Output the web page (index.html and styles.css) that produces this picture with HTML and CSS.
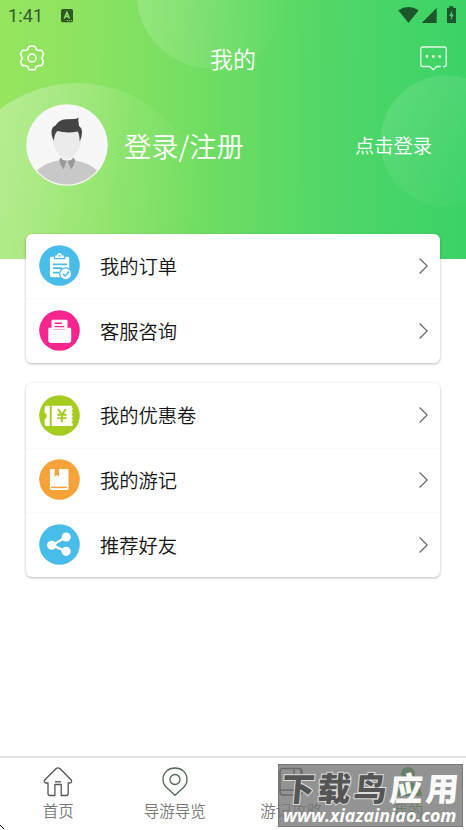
FILE: index.html
```html
<!DOCTYPE html>
<html lang="zh-CN">
<head>
<meta charset="utf-8">
<title>我的</title>
<link rel="stylesheet" href="styles.css">
</head>
<body>
<div class="app">
  <header class="hero">
    <svg class="hero-bg" width="466" height="259" viewBox="0 0 466 259">
      <defs>
        <linearGradient id="g1" x1="0" y1=".5" x2="1" y2=".6"><stop offset="0" stop-color="#fff" stop-opacity=".17"/><stop offset="1" stop-color="#fff" stop-opacity="0"/></linearGradient>
        <linearGradient id="g2" x1="0" y1=".3" x2="1" y2=".5"><stop offset="0" stop-color="#fff" stop-opacity=".36"/><stop offset=".3" stop-color="#fff" stop-opacity=".25"/><stop offset=".65" stop-color="#fff" stop-opacity=".08"/><stop offset="1" stop-color="#fff" stop-opacity="0"/></linearGradient>
        <linearGradient id="g3" x1=".1" y1=".1" x2=".8" y2=".8"><stop offset="0" stop-color="#fff" stop-opacity=".12"/><stop offset="1" stop-color="#fff" stop-opacity=".02"/></linearGradient>
      </defs>
      <circle cx="212" cy="-7" r="75.500" fill="url(#g1)"/>
      <circle cx="77" cy="209.500" r="126.500" fill="url(#g2)"/>
      <circle cx="446" cy="141" r="65.500" fill="url(#g3)"/>
    </svg>
    <div class="status">
      <span class="clock">1:41</span>
      <svg class="app-badge" width="12" height="14" viewBox="0 0 12 14"><rect width="12" height="13.300" rx="1.500" fill="#315a22"/><path d="M3.300 9.500 5.900 3.500 8.500 9.500M4.300 7.500h3.200" fill="none" stroke="#8be269" stroke-width="1.500"/><path d="M6 11.700h1m1 0h1m1 0h1" stroke="#8be269"/></svg>
      <svg class="signals" width="60" height="18" viewBox="0 0 60 18"><path d="M.3 4.200Q10.500-2.400 20.700 4.200L10.500 17Z" fill="#1c562b"/><path d="M38.700 2v15H23.700Z" fill="#1c562b"/><path d="M49 2h2.200V.2h4.200V2H58v15h-9Z" fill="#1c562b"/><path d="M54.200 4.500 51.200 10h2l-.7 4.500 3.300-6h-2Z" fill="#55cc70"/></svg>
    </div>
    <div class="bar">
      <svg width="24" height="26" viewBox="0 0 24 26" fill="none" stroke="#fff" stroke-width="1.500" stroke-linejoin="round"><path d="M9.800 1.200h4.400q.8 0 1.100.9l.7 2.100 2.500 1.400 2.300-.4q.9-.1 1.200.7l1.300 3q.3.700-.2 1.400L21.500 13l1.600 2.700q.5.700.2 1.400l-1.300 3q-.3.800-1.200.7l-2.300-.4-2.500 1.400-.7 2.100q-.3.900-1.100.9H9.800q-.8 0-1.100-.9L8 21.800l-2.500-1.400-2.300.4q-.9.100-1.200-.7l-1.300-3q-.3-.7.200-1.400L2.500 13 .9 10.300Q.4 9.600.7 8.900l1.300-3q.3-.8 1.200-.7l2.300.4L8 4.200l.7-2.100q.3-.9 1.100-.9Z"/><circle cx="12" cy="13" r="4"/></svg>
      <h1>我的</h1>
      <svg width="27" height="25" viewBox="0 0 27 25" fill="none" stroke="#fff" stroke-opacity=".85" stroke-width="1.300" stroke-linecap="round" stroke-linejoin="round"><path d="M23.500 20.500h1.300q1.400 0 1.400-1.400V2.400Q26.200 1 24.800 1H2.200Q.8 1 .8 2.400v16.700q0 1.400 1.400 1.400h7.600l3.500 3.200 3.500-3.200h3.500"/><path d="M7 10.500h.01M13.300 10.500h.01M19.600 10.500h.01" stroke-width="2.800"/></svg>
    </div>
    <div class="profile">
      <svg class="avatar" width="82" height="82" viewBox="0 0 82 82"><defs><clipPath id="av"><circle cx="41" cy="41" r="39.500"/></clipPath></defs><circle cx="41" cy="41" r="40.800" fill="#f7f7f7"/><g clip-path="url(#av)"><path d="M11 66Q21 58 35 56h12Q61 58 71 66L63 82H19Z" fill="#c8c8c8"/><path d="M27.300 40Q25.500 31 28 28.500 30 25 41 25T54 28.500Q56.500 31 54.700 40 53 45 50.500 48.500 46 55 41 55T31.500 48.500Q29 45 27.300 40Z" fill="#ebebeb"/><path d="M28 37Q24.500 31 25.800 25.500 26.500 22.500 29.500 21.500 33 15.500 40 15.200L48 15Q50.500 15 52.300 13.500 52.200 17 53 22 56 24 56 28 56 33 53.700 37.500 53.700 31 51.700 27.500 41 29.500 31.500 27 28 30 28 37Z" fill="#444"/><path d="M34.500 53.500Q37 56.500 40.500 57.500L37.500 65.500Q34 61 33.300 56ZM47.500 53.500Q45 56.500 41.800 57.500L45 65.500Q48.500 61 49.200 56Z" fill="#999"/></g></svg>
      <span class="login">登录/注册</span>
      <span class="tap">点击登录</span>
    </div>
  </header>

  <main class="menus">
    <section class="card">
      <div class="row">
        <svg class="ico" viewBox="0 0 42 42"><circle cx="21" cy="21" r="20.800" fill="#49bdea"/><path d="M12.500 12h2.700v2.600h11.600V12h2.700q1.500 0 1.500 1.500V33H13q-1.800 0-1.800-1.700V13.500Q11.200 12 12.500 12Z" fill="#fff"/><path d="M16.500 13.400v-2.600h2q.2-2.600 2.500-2.600t2.500 2.600h2v2.600Z" fill="#fff"/><circle cx="21" cy="11" r="1" fill="#49bdea"/><path d="M15 19.800h13M15 23.700h8M15 28.400h5" stroke="#49bdea" stroke-width="1.800" stroke-linecap="round"/><circle cx="27.300" cy="29.500" r="6.800" fill="#49bdea"/><circle cx="27.300" cy="29.500" r="5.500" fill="#fff"/><path d="m24.500 29.500 2.200 2.200 4-4.400" fill="none" stroke="#49bdea" stroke-width="1.600"/></svg>
        <span class="label">我的订单</span>
        <svg class="chev" viewBox="0 0 9 16"><path d="m.6.500 7.600 7.500-7.600 7.500"/></svg>
      </div>
      <div class="row">
        <svg class="ico" viewBox="0 0 42 42"><circle cx="21" cy="21" r="20.800" fill="#f9258e"/><path d="M12.800 20V11.500Q12.800 10 14.300 10h13.400q1.500 0 1.500 1.500V20Z" fill="#fff"/><path d="M16 13.600h7.500M16 17h10" stroke="#f9258e" stroke-width="1.400"/><path d="M9.500 19.700q0-1.700 1.700-1.700l4.500 2.200h10.600l4.500-2.200q2.200 0 2.200 1.700v11.500q0 2.500-2.500 2.500H12q-2.500 0-2.500-2.500Z" fill="#fff"/></svg>
        <span class="label">客服咨询</span>
        <svg class="chev" viewBox="0 0 9 16"><path d="m.6.500 7.600 7.500-7.600 7.500"/></svg>
      </div>
    </section>
    <section class="card">
      <div class="row">
        <svg class="ico" viewBox="0 0 42 42"><circle cx="21" cy="21" r="20.800" fill="#a5cd20"/><path d="M7.500 11H11v20.800H7.500q-1.700 0-1.700-2v-5q2.300-1 2.300-3.300t-2.300-3.300v-5Q5.800 11 7.500 11ZM13 11h20.500v2h1v2h-1v2h1v2h-1v2h1v2h-1v2h1v2h-1v2h1v2.800H13Z" fill="#fff"/><path d="m19.500 14.500 4 5.500 4-5.500M18.800 20.300h9.400M18.800 23.700h9.400M23.500 20v8" fill="none" stroke="#a5cd20" stroke-width="2"/></svg>
        <span class="label">我的优惠卷</span>
        <svg class="chev" viewBox="0 0 9 16"><path d="m.6.500 7.600 7.500-7.600 7.500"/></svg>
      </div>
      <div class="row">
        <svg class="ico" viewBox="0 0 42 42"><circle cx="21" cy="21" r="20.800" fill="#f8a23a"/><rect x="11.200" y="10.300" width="19" height="21.500" rx="1.500" fill="#fff"/><path d="M16 10.300h4.600v8l-2.300-2-2.300 2Z" fill="#f8a23a"/><path d="M12.200 29.100h16.500" stroke="#f8a23a" stroke-width="1.500"/></svg>
        <span class="label">我的游记</span>
        <svg class="chev" viewBox="0 0 9 16"><path d="m.6.500 7.600 7.500-7.600 7.500"/></svg>
      </div>
      <div class="row">
        <svg class="ico" viewBox="0 0 42 42"><circle cx="21" cy="21" r="20.800" fill="#49bdea"/><path d="M27.500 13.500 13.500 21.800l14 6" fill="none" stroke="#fff" stroke-width="2.500"/><circle cx="27.800" cy="13.300" r="4.700" fill="#fff"/><circle cx="13" cy="21.800" r="4.700" fill="#fff"/><circle cx="27.800" cy="28" r="4.700" fill="#fff"/></svg>
        <span class="label">推荐好友</span>
        <svg class="chev" viewBox="0 0 9 16"><path d="m.6.500 7.600 7.500-7.600 7.500"/></svg>
      </div>
    </section>
  </main>

  <nav class="tabs">
    <div class="tab">
      <svg width="30" height="30" viewBox="0 0 30 30" fill="none" stroke="#555" stroke-width="1.300" stroke-linejoin="round"><path d="M13.200 1.500Q15 .2 16.800 1.500L28.300 13q1 3-1.500 3h-1.600v10.500q0 2-2 2h-5V17.500h-6.300v11H7q-2 0-2-2V16H3.200q-2.500 0-1.500-3Z"/><path d="M12 14.800h6"/></svg>
      <span>首页</span>
    </div>
    <div class="tab">
      <svg width="30" height="30" viewBox="0 0 30 30" fill="none" stroke="#526754" stroke-width="1.300" stroke-linejoin="round"><path d="M15 28.300 6.500 20.500Q3 17 3 12.500C3 5.500 8.500 1 15 1s12 4.500 12 11.500Q27 17 23.500 20.500Z"/><circle cx="15" cy="12.500" r="5"/></svg>
      <span>导游导览</span>
    </div>
    <div class="tab">
      <svg width="30" height="30" viewBox="0 0 30 30" fill="none" stroke="#333" stroke-width="1.500"><rect x="4" y="1.500" width="22" height="26.500" rx="3"/><path d="M4 23h22M18 2v12l3.500-3 3.500 3V2"/></svg>
      <span>游记攻略</span>
    </div>
    <div class="tab active">
      <svg width="30" height="30" viewBox="0 0 30 30" fill="#1fa52f"><circle cx="15" cy="7" r="7"/><path d="M1 29Q2 15 15 15t14 14Z"/></svg>
      <span>我的</span>
    </div>
  </nav>

  <svg class="cursor" width="5" height="5" viewBox="0 0 5 5"><path d="M0 0h1v1h1v1H1V1H0ZM2 2h1v1h1v1H3V3H2Z" fill="#000"/></svg>
  <div class="watermark">
    <div class="wm-title"><span class="wm-dark">下载鸟</span><span class="wm-light">应用</span></div>
    <div class="wm-url">www.xiazainiao.com</div>
  </div>
</div>
</body>
</html>
```
FILE: styles.css
```css
* { box-sizing: border-box; margin: 0; }
body {
  background: #fff;
  color: #151515;
  font-family: "Noto Sans CJK SC", sans-serif;
  font-weight: 350;
}
svg { display: block; flex: none; }
.app {
  position: relative;
  width: 466px;
  height: 830px;
  overflow: hidden;
  display: flex;
  flex-direction: column;
}
.hero {
  position: relative;
  height: 259px;
  flex: none;
  color: #fff;
  background: linear-gradient(91deg, #96e55f 0%, #8be361 20%, #69dc63 50%, #4fd768 72%, #3bd266 100%);
}
.hero-bg { position: absolute; inset: 0; }
.status, .bar, .profile { position: relative; display: flex; align-items: center; }
.status { height: 32px; padding: 0 8px; }
.clock { font: 400 18px/32px Roboto, sans-serif; color: #33592a; width: 53px; letter-spacing: .1px; }
.signals { margin-left: auto; margin-top: -2px; }
.app-badge { margin-top: -1px; }
.bar { height: 52px; padding: 0 19px 0 20px; justify-content: space-between; }
.bar h1 { font-size: 23px; font-weight: 350; line-height: 34px; padding-left: 2px; }
.profile { height: 122px; padding: 0 34px 0 26px; }
.login { font-size: 27.300px; margin: -1px 0 0 16px; line-height: 40px; white-space: nowrap; }
.tap { font-size: 19.300px; margin: -1px 0 0 auto; }
.menus {
  position: relative;
  margin-top: -25.500px;
  padding: 0 26px;
  display: flex;
  flex-direction: column;
  gap: 20px;
}
.card {
  background: #fff;
  border-radius: 6px;
  box-shadow: 0 1px 3px rgba(0, 0, 0, .28);
}
.row { display: flex; align-items: center; height: 64.700px; padding: 0 12px 0 13px; }
.row + .row { box-shadow: inset 0 1px #fafafa; }
.ico { width: 41px; height: 41px; }
.label { font-size: 19.300px; line-height: 28px; margin-left: 20px; }
.chev { width: 9px; height: 16px; margin-left: auto; fill: none; stroke: #606060; stroke-width: 1.100; }
.tabs {
  margin-top: auto;
  height: 74px;
  flex: none;
  display: grid;
  grid-template-columns: repeat(4, 1fr);
  border-top: 2px solid #e4e4e4;
}
.tab {
  display: flex;
  flex-direction: column;
  align-items: center;
  padding-top: 9px;
  font-size: 15.500px;
  line-height: 24px;
  color: #777;
}
.tab span { margin-top: 1px; }
.tab.active { color: #1fa52f; }
.cursor { position: absolute; left: 0; bottom: 0; }
.watermark {
  position: absolute;
  left: 278px;
  top: 764px;
  width: 185px;
  height: 63px;
  background: rgba(120, 120, 120, .8);
  border: 1px solid #777;
  color: #fff;
  white-space: nowrap;
}
.wm-title {
  margin: 4px 0 0 3px;
  font-size: 33px;
  letter-spacing: 3px;
  line-height: 37px;
  font-weight: 900;
  transform: skewX(-5deg);
}
.wm-dark { color: #555; -webkit-text-stroke: 2px #ddd; paint-order: stroke fill; }
.wm-light { opacity: .95; }
.wm-url {
  margin: -1px 0 0 4px;
  font: italic 700 17.800px/21px "Open Sans", sans-serif;
}
```
